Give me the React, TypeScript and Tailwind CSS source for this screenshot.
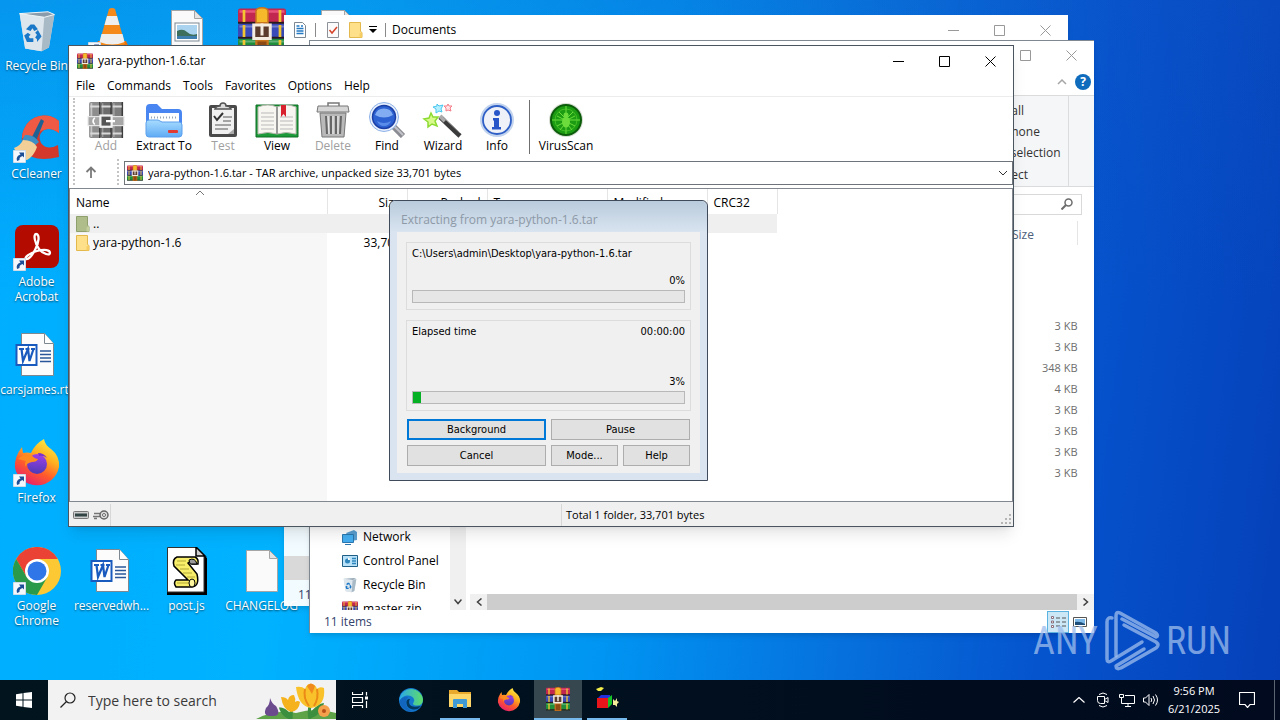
import React from "react";

type Kids = { children?: React.ReactNode };

/* ---------- shared glyphs ---------- */

function RarIcon({ className, mono = false }: { className: string; mono?: boolean }) {
  const c = mono
    ? { a: "#8d8d8d", b: "#6c6c6c", c: "#7d7d7d", dk: "#3c3c3c", belt: "#9a9a9a", edge: "#d9d9d9", lite: "#c4c4c4" }
    : { a: "#c2274f", b: "#3a4ab8", c: "#1f8f3c", dk: "#2a1a20", belt: "#c8741c", edge: "#f3c531", lite: "#e7557c" };
  return (
    <svg className={className} viewBox="0 0 32 32" aria-hidden="true">
      <g transform={mono ? "rotate(-90 16 16)" : undefined}>
        <rect x="0" y="1" width="32" height="10" rx="1.5" fill={c.a} />
        <rect x="0" y="11" width="32" height="10" rx="1.5" fill={c.b} />
        <rect x="0" y="21" width="32" height="10" rx="1.5" fill={c.c} />
        <path d="M1 3h30" stroke={c.lite} strokeWidth="1.6" />
        <path d="M1 13h30M1 23h30" stroke="#ffffff" strokeOpacity=".3" strokeWidth="1.4" />
        <path d="M0 10.5h32M0 20.5h32M0 30.5h32" stroke={c.dk} strokeWidth="1.4" />
        <path d="M4 2v8M4 12v8M4 22v8M28 2v8M28 12v8M28 22v8" stroke={c.edge} strokeWidth="1.8" />
      </g>
      {mono ? (
        <>
          <rect x="0" y="13" width="32" height="8" fill="#a6a6a6" stroke="#e9e9e9" />
          <path d="M6 14q-3 3 0 6" fill="none" stroke="#fff" strokeWidth="1.5" />
          <rect x="11" y="12" width="10" height="10" fill="#555" stroke="#f2f2f2" strokeWidth="2" />
          <path d="M16 17h8" stroke="#fff" strokeWidth="2" />
        </>
      ) : (
        <>
          <path d="M11.5 3q0-3 4.5-3t4.5 3v29h-9z" fill={c.belt} />
          <path d="M12.5 3q0-2 3.5-2t3.5 2v7h-7z" fill="#f6b92c" />
          <path d="M13 23h6v8h-6z" fill="#8d4a15" />
          <rect x="10.5" y="12" width="11" height="9" fill="#5b3b2c" stroke="#f4ece0" strokeWidth="2" />
          <path d="M16 11v8" stroke="#f4ece0" strokeWidth="2" />
        </>
      )}
    </svg>
  );
}

function FolderIcon({ className, green = false }: { className: string; green?: boolean }) {
  return (
    <svg className={className} viewBox="0 0 14 16" aria-hidden="true">
      <path d="M.5.5h11v9l1.5 1v5H.5z" fill={green ? "#aebd8a" : "#ffe08a"} stroke={green ? "#8fa06c" : "#e3b84d"} />
      <path d="M10.5 15.5v-4l2.5-1.5v5.5z" fill={green ? "#c4cf9e" : "#f6cd62"} />
    </svg>
  );
}

function MinIcon() {
  return (
    <svg className="h-[11px] w-[11px]" viewBox="0 0 11 11" aria-hidden="true">
      <path d="M0 5.5h11" stroke="currentColor" />
    </svg>
  );
}
function MaxIcon() {
  return (
    <svg className="h-[11px] w-[11px]" viewBox="0 0 11 11" aria-hidden="true">
      <path d="M.5.5h10v10H.5z" fill="none" stroke="currentColor" />
    </svg>
  );
}
function CloseIcon() {
  return (
    <svg className="h-[11px] w-[11px]" viewBox="0 0 11 11" aria-hidden="true">
      <path d="M.5.5l10 10M10.5.5l-10 10" stroke="currentColor" />
    </svg>
  );
}

function WindowButtons({ className }: { className: string }) {
  const cls = "flex w-[46px] items-center justify-center";
  return (
    <div className={`flex self-stretch ${className}`}>
      <button className={cls} aria-label="Minimize"><MinIcon /></button>
      <button className={cls} aria-label="Maximize"><MaxIcon /></button>
      <button className={cls} aria-label="Close"><CloseIcon /></button>
    </div>
  );
}

/* ---------- desktop icons ---------- */

function Shortcut({ children }: Kids) {
  return (
    <span className="relative block h-12 w-12">
      {children}
      <svg className="absolute bottom-0 left-0 h-[13px] w-[13px]" viewBox="0 0 13 13" aria-hidden="true">
        <path d="M.5.5h12v12H.5z" fill="#f4f8fc" stroke="#cfdbe6" />
        <path d="M4 11q-1.5-5 3.5-6.5L6 2.5h5v5L9.5 6Q6 7 6.5 10z" fill="#1e4f96" />
      </svg>
    </span>
  );
}

function BinIcon({ className }: { className: string }) {
  return (
    <svg className={className} viewBox="0 0 48 48" aria-hidden="true">
      <path d="M5 5l31-2 7 3-6 36-8 4-18-3z" fill="#cfdbe4" />
      <path d="M5 5l27 4-3 37-18-3z" fill="#dde6ec" />
      <path d="M32 9l11-3-6 36-8 4z" fill="#a9bac7" />
      <path d="M5 5l31-2 7 3-11 3z" fill="#8a9cab" stroke="#f3f8fb" />
      <path d="M12 22l5-5 4 0 4 5-4 2-2-3-2 3zM25 23l4 7-5 6v-3l-2-2 2-3-2-2zM20 36h-7l-3-7 4-3 3 2-2 2 1 2h4z" fill="#1b78c8" />
    </svg>
  );
}

function VlcIcon() {
  return (
    <svg className="h-12 w-12" viewBox="0 0 48 48" aria-hidden="true">
      <path d="M10 34h28l5 11H5z" fill="#e9700c" />
      <path d="M21 2q3-2 6 0l10 35q-13 6-26 0z" fill="#f58a1b" />
      <path d="M19 9h10l2.5 9h-15zM13.500 27h21l2 8q-12 5-25 0z" fill="#efefef" />
    </svg>
  );
}

function ImageFileIcon() {
  return (
    <svg className="h-12 w-12" viewBox="0 0 48 48" aria-hidden="true">
      <path d="M8.5 3.5h23l8 8v33h-31z" fill="#fafafa" stroke="#a5a5a5" />
      <path d="M31.5 3.5v8h8z" fill="#e4e4e4" stroke="#a5a5a5" />
      <rect x="12" y="16" width="24" height="18" fill="#fff" stroke="#7b8894" />
      <rect x="14" y="18" width="20" height="14" fill="#a9d3ef" />
      <path d="M14 24q6-3 10 1t10 2v5H14z" fill="#3d6f5c" />
      <path d="M14 29h20v3H14z" fill="#3f7fb0" />
    </svg>
  );
}

function PlainFileIcon() {
  return (
    <svg className="h-12 w-12" viewBox="0 0 48 48" aria-hidden="true">
      <path d="M8.5 3.5h23l8 8v33h-31z" fill="#fafafa" stroke="#a5a5a5" />
      <path d="M31.5 3.5v8h8z" fill="#e4e4e4" stroke="#a5a5a5" />
    </svg>
  );
}

function WordIcon() {
  return (
    <svg className="h-12 w-12" viewBox="0 0 48 48" aria-hidden="true">
      <path d="M8.5 2.5h23l9 10v32h-32z" fill="#fcfcfc" stroke="#7e8890" />
      <path d="M31.5 2.5v10h9" fill="#fff" stroke="#7e8890" />
      <path d="M27 20h11M27 23.5h11M27 27h11M27 30.5h11" stroke="#2b579a" strokeWidth="1.3" />
      <rect x="3.5" y="14" width="20" height="20" fill="#fff" stroke="#185abd" strokeWidth="2" />
      <path d="M6 18h5M12.5 18h4M18 18h4M8.5 18l1.5 12 5-12 1.5 12L20.5 18" fill="none" stroke="#185abd" strokeWidth="2.2" />
    </svg>
  );
}

function AcrobatIcon() {
  return (
    <svg className="h-12 w-12" viewBox="0 0 48 48" aria-hidden="true">
      <rect x="2" y="2" width="44" height="43" rx="8" fill="#b30b00" />
      <path
        d="M23 11c4 0 3 9-1 16-3 6-7 10-9 9s3-6 11-8 13-1 13 2-7 1-11-4-6-15-3-15z"
        fill="none" stroke="#fff" strokeWidth="2.3"
      />
    </svg>
  );
}

function CCleanerIcon() {
  return (
    <svg className="h-12 w-12" viewBox="0 0 48 48" aria-hidden="true">
      <path d="M46 6A22 22 0 0 0 11 14Q6 26 12 36q8 12 34 6L45 30Q34 36 28 28q-4-8 3-13 7-3 15 3z" fill="#d4382a" />
      <path d="M46 6A22 22 0 0 0 11 14q-2 4-2 9l15-3q2-4 7-5 7-3 15 3z" fill="#ee5a43" />
      <path d="M28 4l3 2-8 20-5-2z" fill="#1f6193" />
      <path d="M12 20q9-1 14 7l-6 5-12-5z" fill="#3d8fc4" />
      <path d="M1 33q7-3 9-8 10 0 14 7-3 9-10 13Q6 45 1 33z" fill="#f3cf98" />
    </svg>
  );
}

function FirefoxIcon({ className }: { className: string }) {
  return (
    <svg className={className} viewBox="0 0 48 48" aria-hidden="true">
      <defs>
        <linearGradient id="ffx" x1=".8" y1="0" x2=".25" y2="1">
          <stop offset="0" stopColor="#fff04a" />
          <stop offset=".35" stopColor="#ffb21f" />
          <stop offset=".65" stopColor="#ff5a2c" />
          <stop offset="1" stopColor="#e51b72" />
        </linearGradient>
        <linearGradient id="ffp" x1=".5" y1="0" x2=".4" y2="1">
          <stop offset="0" stopColor="#a03ee8" />
          <stop offset="1" stopColor="#4b3bb5" />
        </linearGradient>
      </defs>
      <path d="M31 0q1 6 7 10 9 7 8 18A22.500 22.500 0 0 1 2 29Q1 18 9 8l1 6q4-1 8 0Q22 5 31 0z" fill="url(#ffx)" />
      <circle cx="24" cy="25" r="10" fill="url(#ffp)" />
      <path d="M5 20q6-6 14-4 1 3 6 4-1 3-6 3-6 1-6 5-2-3 0-6z" fill="#ff8a1f" />
      <path d="M25 14q6 0 9 5-4-3-8-2z" fill="#7b2fd0" />
    </svg>
  );
}

function ChromeIcon() {
  return (
    <svg className="h-12 w-12" viewBox="0 0 48 48" aria-hidden="true">
      <circle cx="24" cy="24" r="24" fill="#fcc934" />
      <path d="M3.2 12A24 24 0 0 1 44.8 12H24l-10.4 18z" fill="#ea4335" />
      <path d="M3.2 12A24 24 0 0 0 24 48l10.4-18H13.6z" fill="#2a9a4a" />
      <circle cx="24" cy="24" r="12" fill="#fff" />
      <circle cx="24" cy="24" r="9.5" fill="#2f76e8" />
    </svg>
  );
}

function ScriptIcon() {
  return (
    <svg className="h-12 w-12" viewBox="0 0 48 48" aria-hidden="true">
      <path d="M4 1h29l11 10v37H4z" fill="#000" />
      <path d="M4.5.5H33l8 8V45H4.500z" fill="#fff" stroke="#333" />
      <path d="M33 0v9h9z" fill="#cfcfcf" stroke="#000" strokeWidth="1.5" />
      <path d="M14 10h18q4 2 3 7h-6q-1-4-4-1l9 11q3 13-6 13H13q-3-4 0-7h12L11 19q-2-7 3-9z" fill="#f8ee6a" stroke="#000" strokeWidth="1.5" />
      <path d="M26 13q6-3 8 4h-7z" fill="#9a9a9a" stroke="#000" />
      <path d="M14 14h9M13 18h9M17 22h9M20 26h9M24 30h8M14 36h13" stroke="#b3a838" />
      <ellipse cx="29" cy="36" rx="3" ry="4" fill="#fff7a0" stroke="#000" />
    </svg>
  );
}

type DeskItem = { cell: string; label?: string; icon: React.ReactNode };
const desk: DeskItem[] = [
  { cell: "col-start-1 row-start-1", label: "Recycle Bin", icon: <span className="block h-12 w-12 pt-0.5 pl-0.5"><BinIcon className="h-11 w-11" /></span> },
  { cell: "col-start-2 row-start-1", icon: <Shortcut><VlcIcon /></Shortcut> },
  { cell: "col-start-3 row-start-1", icon: <ImageFileIcon /> },
  { cell: "col-start-4 row-start-1", icon: <RarIcon className="h-12 w-12" /> },
  { cell: "col-start-5 row-start-1", icon: <PlainFileIcon /> },
  { cell: "col-start-1 row-start-2", label: "CCleaner", icon: <Shortcut><CCleanerIcon /></Shortcut> },
  { cell: "col-start-1 row-start-3", label: "Adobe Acrobat", icon: <Shortcut><AcrobatIcon /></Shortcut> },
  { cell: "col-start-1 row-start-4", label: "carsjames.rtf", icon: <WordIcon /> },
  { cell: "col-start-1 row-start-5", label: "Firefox", icon: <Shortcut><FirefoxIcon className="h-12 w-12" /></Shortcut> },
  { cell: "col-start-1 row-start-6", label: "Google Chrome", icon: <Shortcut><ChromeIcon /></Shortcut> },
  { cell: "col-start-2 row-start-6", label: "reservedwh...", icon: <WordIcon /> },
  { cell: "col-start-3 row-start-6", label: "post.js", icon: <ScriptIcon /> },
  { cell: "col-start-4 row-start-6", label: "CHANGELOG", icon: <PlainFileIcon /> },
];

function DesktopIcons() {
  return (
    <ul className="-ml-px grid auto-rows-[108px] grid-cols-[repeat(5,75px)] pt-[7px]">
      {desk.map((d) => (
        <li key={d.cell} className={`flex flex-col items-center gap-[3px] ${d.cell}`}>
          {d.icon}
          {d.label && (
            <span className="text-center text-[12px] leading-[15px] text-white [text-shadow:0_1px_2px_rgba(0,0,0,0.6)]">
              {d.label}
            </span>
          )}
        </li>
      ))}
    </ul>
  );
}

/* ---------- explorer windows behind ---------- */

function DocumentsWindow() {
  return (
    <section className="absolute top-[15px] left-[284px] flex h-[591px] w-[784px] flex-col bg-white/95 shadow-md" aria-label="Documents">
      <header className="flex h-[30px] items-center bg-white">
        <svg className="ml-2 h-4 w-4" viewBox="0 0 16 16" aria-hidden="true">
          <path d="M2.5.5h8l3 3v12h-11z" fill="#fff" stroke="#7b8894" />
          <path d="M4.5 4h3M4.5 6.5h7M4.5 9h7M4.5 11.5h7M9 4h2" stroke="#2378c4" strokeWidth="1.5" />
        </svg>
        <span className="ml-[7px] h-3.5 border-l border-[#8a8a8a]" />
        <svg className="ml-[9px] h-4 w-4" viewBox="0 0 16 16" aria-hidden="true">
          <path d="M2.5.5h11v15h-11z" fill="#fbfbfb" stroke="#8d9299" />
          <path d="M4.5 8l2.5 3 5-6" fill="none" stroke="#d5442b" strokeWidth="1.5" />
        </svg>
        <FolderIcon className="ml-2 h-4 w-3.5" />
        <svg className="ml-1.5 h-2 w-2" viewBox="0 0 8 8" aria-hidden="true">
          <path d="M0 .5h8" stroke="#000" />
          <path d="M0 3h8L4 7z" fill="#000" />
        </svg>
        <span className="ml-2 h-3.5 border-l border-[#8a8a8a]" />
        <h2 className="ml-1.5 flex-1 text-[12px]">Documents</h2>
        <WindowButtons className="text-[#999]" />
      </header>
      <div className="flex-1" />
      <div className="h-6 bg-[#d9d9d9]" />
      <footer className="h-[26px] pl-3.5 text-[12px] leading-[30px] text-[#33436b]">11 items</footer>
    </section>
  );
}

const sizes = ["3 KB", "3 KB", "348 KB", "4 KB", "3 KB", "3 KB", "3 KB", "3 KB"];

function NetworkIcon() {
  return (
    <svg className="h-4 w-4" viewBox="0 0 16 16" aria-hidden="true">
      <path d="M4 4l8-3 3 2v8l-6 1z" fill="#5b9fd0" />
      <path d="M.5 5.5h11v8H.500z" fill="#45aef0" stroke="#2b77ae" />
      <path d="M3 15.5h6" stroke="#2b77ae" />
    </svg>
  );
}
function ControlPanelIcon() {
  return (
    <svg className="h-4 w-4" viewBox="0 0 16 16" aria-hidden="true">
      <path d="M.5 2.5h15v11H.500z" fill="#b9e1f7" stroke="#1f5f86" />
      <circle cx="5.5" cy="8" r="2.5" fill="#2f86bd" />
      <path d="M6 7V4.5A2.5 2.5 0 0 1 8 7z" fill="#fff" />
      <path d="M10 5.5h4M10 8h4M10 10.5h4" stroke="#2f86bd" strokeWidth="1.5" />
    </svg>
  );
}

const nav = [
  { label: "Network", icon: <NetworkIcon /> },
  { label: "Control Panel", icon: <ControlPanelIcon /> },
  { label: "Recycle Bin", icon: <BinIcon className="h-4 w-4" /> },
  { label: "master.zip", icon: <RarIcon className="h-4 w-4" /> },
];

function ExplorerWindow() {
  return (
    <section className="absolute top-[40px] left-[309px] flex h-[593px] w-[785px] flex-col border-t border-l border-[#7f8790] bg-white shadow-md" aria-label="File Explorer">
      <header className="flex h-7 items-center justify-end">
        <WindowButtons className="text-[#999]" />
      </header>
      <div className="flex h-[26px] items-center justify-end gap-2 pr-[3px]">
        <svg className="h-2 w-2.5" viewBox="0 0 10 8" aria-hidden="true">
          <path d="M1 6l4-4 4 4" fill="none" stroke="#a5a5a5" strokeWidth="1.5" />
        </svg>
        <button className="flex h-4 w-4 items-center justify-center rounded-full bg-[#0f6cbd] text-[12px] font-bold text-white" aria-label="Help">?</button>
      </div>
      <div className="flex h-[92px] justify-end border-y border-[#dadbdc] bg-[#f5f6f7] pr-[25px]">
        <div className="flex w-[94px] flex-col border-r border-[#dcdddf] pt-1 text-[12px] text-[#333]">
          <button className="h-[22px] text-left">Select all</button>
          <button className="h-[22px] text-left">Select none</button>
          <button className="h-[22px] text-left whitespace-nowrap">Invert selection</button>
          <span className="pl-5 leading-[22px]">Select</span>
        </div>
      </div>
      <div className="flex h-[34px] items-center justify-end pr-3">
        <label className="flex h-[21px] w-[180px] items-center border border-[#d9d9d9] pr-2">
          <input className="min-w-0 flex-1 outline-none" aria-label="Search" />
          <svg className="h-3 w-3" viewBox="0 0 12 12" aria-hidden="true">
            <circle cx="7.5" cy="4.5" r="3.5" fill="none" stroke="#6d6d6d" strokeWidth="1.5" />
            <path d="M5 7L.5 11.5" stroke="#6d6d6d" strokeWidth="2" />
          </svg>
        </label>
      </div>
      <div className="flex min-h-0 flex-1">
        <div className="flex w-[140px] flex-col justify-end overflow-hidden">
          <ul className="-mb-[11px]">
            {nav.map((n) => (
              <li key={n.label} className="flex h-6 items-center gap-[5px] pl-8 text-[12px]">
                {n.icon}
                {n.label}
              </li>
            ))}
          </ul>
        </div>
        <div className="flex w-4 flex-col justify-end bg-[#f0f0f0]">
          <button className="flex h-[17px] items-center justify-center" aria-label="Scroll down">
            <svg className="h-1.5 w-2" viewBox="0 0 8 6" aria-hidden="true">
              <path d="M.5.5L4 4.5 7.5.5" fill="none" stroke="#404040" strokeWidth="1.5" />
            </svg>
          </button>
        </div>
        <div className="ml-1 flex flex-1 flex-col">
          <div className="flex-1 pr-4">
            <table className="ml-auto w-[76px]">
              <thead>
                <tr className="h-6">
                  <th className="border-r border-[#e5e5e5] pt-1 pl-2.5 text-left text-[12px] font-normal text-[#4c607a]">Size</th>
                </tr>
              </thead>
              <tbody className="before:block before:h-[71px]">
                {sizes.map((s, i) => (
                  <tr key={i} className="h-[21px]">
                    <td className="text-right text-[11px] text-[#6d6d6d]">{s}</td>
                  </tr>
                ))}
              </tbody>
            </table>
          </div>
          <div className="flex h-4 items-center bg-[#f0f0f0]">
            <button className="flex w-[17px] justify-center" aria-label="Scroll left">
              <svg className="h-2 w-1.5" viewBox="0 0 6 8" aria-hidden="true">
                <path d="M5.5.5L1.5 4l4 3.5" fill="none" stroke="#404040" strokeWidth="1.5" />
              </svg>
            </button>
            <span className="h-full flex-1 bg-[#cdcdcd]" />
            <button className="flex w-[17px] justify-center" aria-label="Scroll right">
              <svg className="h-2 w-1.5" viewBox="0 0 6 8" aria-hidden="true">
                <path d="M.5.5l4 3.5-4 3.5" fill="none" stroke="#404040" strokeWidth="1.5" />
              </svg>
            </button>
          </div>
        </div>
      </div>
      <footer className="flex h-[23px] items-center pl-3.5 text-[12px] text-[#33436b]">
        <span className="flex-1">11 items</span>
        <button className="flex h-[22px] w-[22px] items-center justify-center border border-[#5cb3e0] bg-[#cce8f7]" aria-label="Details view">
          <svg className="h-3.5 w-4" viewBox="0 0 16 14" aria-hidden="true">
            <path d="M1.5 1.5h2v2h-2zM1.5 6h2v2h-2zM1.5 10.5h2v2h-2z" fill="#fff" stroke="#8c6f7b" />
            <path d="M6 3h4M12 3h4M6 7h4M12 7h4M6 11h4M12 11h4" stroke="#555" />
          </svg>
        </button>
        <button className="flex w-[25px] justify-center pr-1" aria-label="Large icons view">
          <svg className="h-2.5 w-3.5" viewBox="0 0 14 10" aria-hidden="true">
            <path d="M.5.5h13v9H.500z" fill="#fff" stroke="#555" />
            <path d="M2 2h10v6H2z" fill="#7db9e8" />
            <path d="M2 5q5-1 10 2v1H2z" fill="#1e4e79" />
          </svg>
        </button>
      </footer>
    </section>
  );
}

/* ---------- archiver toolbar icons ---------- */

const big = "h-9 w-11";

function ExtractIcon() {
  return (
    <svg className={big} viewBox="0 0 44 36" aria-hidden="true">
      <defs>
        <linearGradient id="fold" x1="0" y1="0" x2="0" y2="1">
          <stop offset="0" stopColor="#a8dcff" />
          <stop offset="1" stopColor="#5fabf5" />
        </linearGradient>
      </defs>
      <path d="M4 6q0-4 4-4h7l5 5h16q4 0 4 4v12H4z" fill="#4a86f2" />
      <path d="M7 11h30v12H7z" fill="#fff" />
      <path d="M9 15.5h26" stroke="#9aa5b5" strokeWidth="2" strokeDasharray="1 2" />
      <path d="M4 21q0-3 3-3h9l4 2h17q3 0 3 3v9q0 3-3 3H7q-3 0-3-3z" fill="url(#fold)" stroke="#5c9fec" />
      <rect x="26" y="28" width="10" height="3" rx="1" fill="#e23a30" />
    </svg>
  );
}
function TestIcon() {
  return (
    <svg className={big} viewBox="0 0 44 36" aria-hidden="true">
      <rect x="8" y="3" width="28" height="32" rx="2" fill="#4a4a4a" />
      <path d="M11 6h22v26H11z" fill="#f0f0f0" />
      <path d="M14 7q1-3 5-3 0-3 3-3t3 3q4 0 5 3z" fill="#ddd" stroke="#555" strokeWidth="1.5" />
      <path d="M13 14l3 4 6-7" fill="none" stroke="#333" strokeWidth="2" />
      <path d="M22 15h9M22 19h8M14 23h16M14 27h13" stroke="#8a8a8a" strokeWidth="1.5" />
      <path d="M33 32l-6 0 6-5z" fill="#aaa" />
    </svg>
  );
}
function ViewIcon() {
  return (
    <svg className={big} viewBox="0 0 44 36" aria-hidden="true">
      <path d="M1 3h42v32H1z" fill="#1c9a3a" stroke="#0c6e25" />
      <path d="M3 5q10-4 19 0v27q-9-3-19 0zM22 5q9-4 19 0v27q-10-3-19 0z" fill="#f7f6f1" stroke="#b8b8ae" />
      <path d="M6 11h13M6 15h13M6 19h13M6 23h13M6 27h13M25 15h13M25 19h13M25 23h13M25 27h13" stroke="#b9b9b9" />
      <path d="M22 5v27" stroke="#999" strokeWidth="2" />
      <path d="M26 3h5v12l-2.5-3-2.5 3z" fill="#d8222e" />
    </svg>
  );
}
function DeleteIcon() {
  return (
    <svg className={big} viewBox="0 0 44 36" aria-hidden="true">
      <path d="M17 4V1h11v3" fill="none" stroke="#777" strokeWidth="1.5" />
      <path d="M7 4h30l1 6H6z" fill="#d6d6d6" stroke="#777" />
      <path d="M9 11h26l-2 24H11z" fill="#b9b9b9" stroke="#777" />
      <path d="M15 14l1 18M20 14v18M25 14v18M30 14l-1 18" stroke="#666" strokeWidth="2" />
      <path d="M17 14l1 18M22 14v18M27 14v18" stroke="#f2f2f2" />
    </svg>
  );
}
function FindIcon() {
  return (
    <svg className={big} viewBox="0 0 44 36" aria-hidden="true">
      <path d="M29 25l9 9" stroke="#8b8b93" strokeWidth="6" />
      <path d="M29 24l9 9" stroke="#c3c3ca" strokeWidth="2" />
      <circle cx="19" cy="15" r="14.5" fill="#e6effb" stroke="#8db1e8" />
      <circle cx="19" cy="15" r="11.5" fill="#2d62d2" stroke="#1b3fa5" strokeWidth="1.5" />
      <path d="M10 13a9.5 9.5 0 0 1 18 0q-9 5-18 0z" fill="#82adf2" />
      <path d="M12 19q7 4 14 0-2 5-7 5t-7-5z" fill="#5a8cea" />
    </svg>
  );
}
function WizardIcon() {
  return (
    <svg className={big} viewBox="0 0 44 36" aria-hidden="true">
      <path d="M19 15l20 19" stroke="#3b3b3b" strokeWidth="4.5" />
      <path d="M19 14l5 5" stroke="#aaa" strokeWidth="4" />
      <path d="M22 15l17 16" stroke="#9a9a9a" strokeWidth="1" />
      <path d="M10 11l2 4 5 0-3 4 2 5-5-2-4 3 0-5-4-3 5-1z" fill="#d8fa8c" stroke="#8ddb32" strokeWidth="1.5" />
      <path d="M16 2l2 2 4-1-2 4 1 3-3-1-3 2 0-4-3-2 4-1z" fill="#b3efff" stroke="#49c6ee" />
      <path d="M27 2l1 2 3 0-2 2 1 3-3-1-2 1 0-3-2-2 3 0z" fill="#ffe3e6" stroke="#f47d88" />
    </svg>
  );
}
function InfoIcon() {
  return (
    <svg className={big} viewBox="0 0 44 36" aria-hidden="true">
      <circle cx="22" cy="18" r="17" fill="#c2d3ee" />
      <circle cx="22" cy="18" r="14" fill="#eef1f7" stroke="#2e5fc6" strokeWidth="1.8" />
      <circle cx="22" cy="11" r="3" fill="#2856c8" />
      <path d="M18 16h6v9h2v2.5h-9V25h2v-6.5h-1z" fill="#2856c8" />
    </svg>
  );
}
function VirusIcon() {
  return (
    <svg className={big} viewBox="0 0 44 36" aria-hidden="true">
      <circle cx="22" cy="18" r="17" fill="#d4dbd0" />
      <circle cx="22" cy="18" r="15" fill="#1c9c12" stroke="#0b5c0a" strokeWidth="2" />
      <g stroke="#6bdc3c" fill="none">
        <path d="M22 4v28M8 18h28M15 10l5 5M29 10l-5 5M13 14l6 3M31 14l-6 3M13 24l6-3M31 24l-6-3M16 28l4-5M28 28l-4-5" />
        <circle cx="22" cy="18" r="11" strokeOpacity=".5" />
      </g>
      <ellipse cx="22" cy="20" rx="4" ry="5.5" fill="#6bdc3c" />
      <circle cx="22" cy="13" r="2.5" fill="#6bdc3c" />
    </svg>
  );
}

const tools = [
  { label: "Add", w: "w-[54px]", off: true, icon: <RarIcon mono className={big} /> },
  { label: "Extract To", w: "w-[62px]", off: false, icon: <ExtractIcon /> },
  { label: "Test", w: "w-[56px]", off: true, icon: <TestIcon /> },
  { label: "View", w: "w-[52px]", off: false, icon: <ViewIcon /> },
  { label: "Delete", w: "w-[60px]", off: true, icon: <DeleteIcon /> },
  { label: "Find", w: "w-[48px]", off: false, icon: <FindIcon /> },
  { label: "Wizard", w: "w-[64px]", off: false, icon: <WizardIcon /> },
  { label: "Info", w: "w-[44px]", off: false, icon: <InfoIcon /> },
];

function ToolButton({ label, w, off, icon }: { label: string; w: string; off: boolean; icon: React.ReactNode }) {
  return (
    <button disabled={off} className={`flex flex-col items-center whitespace-nowrap text-[12px] leading-4 disabled:text-[#a0a0a0] ${w}`}>
      {icon}
      {label}
    </button>
  );
}

const heads = [
  { label: "Name", cls: "w-[257px] text-left" },
  { label: "Size", cls: "w-20 text-right" },
  { label: "Packed", cls: "w-20 text-right" },
  { label: "Type", cls: "w-[120px] text-left" },
  { label: "Modified", cls: "w-[100px] text-left" },
  { label: "CRC32", cls: "w-[70px] text-left" },
];

function ArchiverWindow() {
  return (
    <section className="absolute top-[45px] left-[68px] flex h-[482px] w-[946px] flex-col border border-[#4a5560] bg-white text-[12px] shadow-lg" aria-label="yara-python-1.6.tar">
      <header className="flex h-[30px] items-center pl-2">
        <RarIcon className="h-4 w-4" />
        <h1 className="ml-[5px] flex-1">yara-python-1.6.tar</h1>
        <WindowButtons className="" />
      </header>
      <nav className="flex h-5 items-center pl-px">
        {["File", "Commands", "Tools", "Favorites", "Options", "Help"].map((m) => (
          <button key={m} className="px-1.5">{m}</button>
        ))}
      </nav>
      <div className="flex h-[63px] border-t border-[#ececec] pt-[5px]">
        <span className="-mt-1 mr-1 ml-1 border-l-2 border-dotted border-[#c4c4c4]" />
        {tools.map((t) => (
          <ToolButton key={t.label} {...t} />
        ))}
        <span className="mr-[9px] ml-2.5 -mt-0.5 h-[54px] border-l border-[#6f6f6f]" />
        <ToolButton label="VirusScan" w="w-[54px]" off={false} icon={<VirusIcon />} />
      </div>
      <div className="flex h-[29px] pb-[3px]">
        <span className="ml-1 border-l-2 border-dotted border-[#c4c4c4]" />
        <button className="flex w-8 items-center justify-center" aria-label="Up one level">
          <svg className="h-3 w-3" viewBox="0 0 12 12" aria-hidden="true">
            <path d="M6 12V2M1.5 6L6 1.5 10.5 6" fill="none" stroke="#7a7a7a" strokeWidth="1.8" />
          </svg>
        </button>
        <span className="mr-[5px] ml-2.5 border-l-2 border-dotted border-[#c4c4c4]" />
        <label className="relative mt-0.5 flex flex-1 items-center border border-[#6f747a]">
          <RarIcon className="absolute left-0.5 h-4 w-4" />
          <select className="h-full w-full appearance-none bg-transparent pl-[23px] text-[11px] outline-none" aria-label="Archive path">
            <option>yara-python-1.6.tar - TAR archive, unpacked size 33,701 bytes</option>
          </select>
          <svg className="absolute right-1 h-1.5 w-2.5" viewBox="0 0 10 6" aria-hidden="true">
            <path d="M1 1l4 4 4-4" fill="none" stroke="#333" />
          </svg>
        </label>
      </div>
      <div className="relative flex min-h-0 flex-1 border border-[#828790]">
        <svg className="absolute top-px left-[125px] h-1.5 w-2.5" viewBox="0 0 10 6" aria-hidden="true">
          <path d="M1 5l4-4 4 4" fill="none" stroke="#777" />
        </svg>
        <table className="h-full w-[707px] table-fixed">
          <thead>
            <tr className="h-[25px]">
              {heads.map((h) => (
                <th key={h.label} className={`border-r border-[#e5e5e5] px-1.5 pt-0.5 font-normal ${h.cls}`}>{h.label}</th>
              ))}
            </tr>
          </thead>
          <tbody>
            <tr className="h-[19px] bg-[#efefef]">
              <td className="pl-1.5">
                <span className="flex items-center gap-[3px]"><FolderIcon green className="h-4 w-3.5" />..</span>
              </td>
              <td colSpan={5} />
            </tr>
            <tr className="h-[19px]">
              <td className="bg-[#f7f7f7] pl-1.5">
                <span className="flex items-center gap-[3px]"><FolderIcon className="h-4 w-3.5" />yara-python-1.6</span>
              </td>
              <td className="pr-1.5 text-right">33,701</td>
              <td colSpan={4} />
            </tr>
            <tr>
              <td className="bg-[#f7f7f7]" />
              <td colSpan={5} />
            </tr>
          </tbody>
        </table>
      </div>
      <footer className="relative flex h-6 items-center bg-[#f0f0f0] pt-0.5">
        <div className="flex h-full w-[42px] items-center gap-1 border-r border-[#d7d7d7] pl-1">
          <svg className="h-2 w-4" viewBox="0 0 16 8" aria-hidden="true">
            <rect x=".5" y=".5" width="15" height="7" rx="1" fill="#ccc" stroke="#777" />
            <path d="M2 4h12" stroke="#344" strokeWidth="3" />
          </svg>
          <svg className="h-2.5 w-4" viewBox="0 0 16 10" aria-hidden="true">
            <path d="M1 3.5h6M0 6.5h8M1 8.5h3" stroke="#777" strokeWidth="1.5" />
            <circle cx="11" cy="5" r="4" fill="#ddd" stroke="#666" strokeWidth="1.5" />
            <circle cx="11" cy="5" r="1.5" fill="#fff" stroke="#666" />
          </svg>
        </div>
        <div className="h-full flex-1 border-r border-[#d7d7d7]" />
        <div className="w-[451px] pl-1 text-[11px]">Total 1 folder, 33,701 bytes</div>
        <svg className="absolute right-0.5 bottom-0.5 h-2.5 w-2.5" viewBox="0 0 10 10" aria-hidden="true">
          <path d="M8 0h2v2H8zM8 4h2v2H8zM8 8h2v2H8zM4 4h2v2H4zM4 8h2v2H4zM0 8h2v2H0z" fill="#b5b5b5" />
        </svg>
      </footer>
    </section>
  );
}

/* ---------- progress dialog ---------- */

function Bar({ value, label }: { value: number; label: string }) {
  return (
    <div role="progressbar" aria-label={label} aria-valuenow={value} className="h-[13px] border border-[#b8b8b8] bg-[#e6e6e6]">
      <div className="h-full bg-[#06b025]" style={{ width: `${value}%` }} />
    </div>
  );
}

function ProgressDialog() {
  const btn = "h-[21px] border border-[#adadad] bg-[#e1e1e1]";
  return (
    <section
      className="absolute top-[200px] left-[389px] w-[319px] rounded-t-md border border-[#3f4a5a] bg-[#d9e4f0] px-[7px] pb-[7px] font-[Tahoma,'DejaVu_Sans_Condensed','Noto_Sans',sans-serif] text-[11px] leading-[14px]"
      aria-label="Extracting"
    >
      <h2 className="-mx-[7px] h-[31px] rounded-t-md bg-linear-to-b from-[#b9cbdc] to-[#d9e4f0] pt-1 pl-[11px] font-['Open_Sans',sans-serif] text-[12px] leading-[30px] text-[#8d99a6]">
        Extracting from yara-python-1.6.tar
      </h2>
      <div className="flex flex-col bg-[#f0f0f0] px-[9px] pt-[10px] pb-[7px]">
        <div className="flex h-[68px] flex-col border border-[#dcdcdc] px-[5px] pt-1 pb-1.5">
          <p className="flex-1">C:\Users\admin\Desktop\yara-python-1.6.tar</p>
          <p className="pb-0.5 text-right">0%</p>
          <Bar value={0} label="File progress" />
        </div>
        <div className="mt-[10px] flex h-[91px] flex-col border border-[#dcdcdc] px-[5px] pt-1 pb-1.5">
          <p className="flex flex-1 justify-between"><span>Elapsed time</span><span>00:00:00</span></p>
          <p className="pb-0.5 text-right">3%</p>
          <Bar value={3} label="Total progress" />
        </div>
        <div className="mx-px mt-2 grid grid-cols-[139fr_67fr_67fr] gap-[5px]">
          <button className="h-[21px] border-2 border-[#0078d7] bg-[#e1e1e1]">Background</button>
          <button className={`col-span-2 ${btn}`}>Pause</button>
          <button className={btn}>Cancel</button>
          <button className={btn}>Mode...</button>
          <button className={btn}>Help</button>
        </div>
      </div>
    </section>
  );
}

/* ---------- watermark ---------- */

function Watermark() {
  return (
    <div className="pointer-events-none absolute right-[49px] bottom-2 flex items-center gap-1.5 font-['Liberation_Sans_Narrow','Roboto_Condensed',Roboto,sans-serif] text-[38px] leading-[62px] text-[#9dbdec]/75">
      <span>ANY</span>
      <svg className="h-[62px] w-[56px]" viewBox="0 0 56 62" aria-hidden="true">
        <g fill="none" stroke="currentColor" strokeWidth="3.5" strokeLinejoin="round" strokeLinecap="round">
          <path d="M8 8Q3 7 3 12v37q0 4 4 2l31-19" />
          <path d="M12 46V6q0-5 4-3l36 20q3 3 0 4l-34-18" />
          <path d="M20 15l32 17q4 3 0 6L17 58q-5 2-5-2l28-17" />
        </g>
      </svg>
      <span>RUN</span>
    </div>
  );
}

/* ---------- taskbar ---------- */

function EdgeIcon() {
  return (
    <svg className="h-6 w-6" viewBox="0 0 24 24" aria-hidden="true">
      <defs>
        <linearGradient id="edg" x1="0" y1="0" x2="1" y2="0">
          <stop offset="0" stopColor="#2aa9e8" />
          <stop offset="1" stopColor="#5fdc6a" />
        </linearGradient>
      </defs>
      <circle cx="12" cy="12" r="12" fill="#1478cf" />
      <path d="M.5 10A12 12 0 0 1 24 11.500q0 6-6 6-4 0-4-2 2-2 1-4.500Q13 7 8 7.500T.5 13z" fill="url(#edg)" />
      <path d="M9 9q-4 5-1 10 4 6 11 2.500A12 12 0 0 1 .5 13Q4 8 9 9z" fill="#1266bd" />
      <path d="M11 11q-2 3 0 6t11 1q-3 4-8 3.500-6-1-6.500-6T11 11z" fill="#03395f" />
    </svg>
  );
}
function ExplorerIcon() {
  return (
    <svg className="h-5 w-[22px]" viewBox="0 0 22 20" aria-hidden="true">
      <path d="M0 1h8l2 2h12v15H0z" fill="#e8a92c" />
      <path d="M0 5h22v13H0z" fill="#ffd768" />
      <path d="M4 11q0-1 1-1h12q1 0 1 1v8h-4v-4H8v4H4z" fill="#3f9ad6" />
    </svg>
  );
}
function BoxesIcon() {
  return (
    <svg className="h-6 w-6" viewBox="0 0 24 24" aria-hidden="true">
      <path d="M1 2l5-2 3 1-3 3H3z" fill="#f4ee4a" />
      <path d="M3 11l3-3h9v3z" fill="#2330e0" />
      <path d="M2 11h11v10H2z" fill="#e8151a" />
      <path d="M13 11l4-3v9l-4 4z" fill="#16c42a" />
      <path d="M18 12l2 2 2-3v3l2 1-2 2v3l-2-2-2 0v-3z" fill="#f4ee9a" />
    </svg>
  );
}
function TaskViewIcon() {
  return (
    <svg className="h-4 w-4" viewBox="0 0 16 16" aria-hidden="true">
      <path d="M.5 0v2.5h10V0M.5 5.5h10v5H.500zM.5 16v-2.5h10V16M14.5 0v3.5M14.5 9v7" fill="none" stroke="#fff" strokeWidth="1.2" />
      <path d="M13 4.5h3v3h-3z" fill="#fff" />
    </svg>
  );
}
function Flowers() {
  return (
    <svg className="h-[38px] w-20" viewBox="0 0 80 38" aria-hidden="true">
      <path d="M0 38q20-10 40-6 20-6 40 0v6z" fill="#5fa348" />
      <path d="M14 17q2 6 6 8 6 10-3 10-11 1-7-8 4-3 4-10z" fill="#6b4a8e" />
      <path d="M35 38q1-10-1-14M54 38q-2-8 1-16M54 34q8-9 12-10-2 9-12 12M34 34q-6-6-9-6 2 6 9 9" stroke="#3c8f3e" strokeWidth="3" fill="#3c8f3e" />
      <path d="M25 16q5 0 7 3 1-5 6-5 2 4 1 7 3-2 5 0-1 9-9 10-8-2-10-15z" fill="#f6b21c" />
      <path d="M40 6q6-1 9 2 2-6 7-5 4 1 5 5 3-3 7-1 2 18-13 20Q42 25 40 6z" fill="#f9c22a" />
      <path d="M49 8q-2 9 4 17M61 8q2 9-3 17" stroke="#ec8a17" strokeWidth="2" fill="none" />
      <path d="M51 5q4-5 8 0l-3 8z" fill="#f08a1c" />
      <circle cx="68" cy="30" r="6" fill="#f5a04a" />
      <circle cx="68" cy="30" r="2" fill="#b8501a" />
    </svg>
  );
}

function Taskbar() {
  const ico = "flex h-full items-center justify-center";
  return (
    <footer className="relative flex h-10 items-stretch bg-linear-to-r from-[#02151e] to-[#010a1e] text-white">
      <button className={`w-12 ${ico}`} aria-label="Start">
        <svg className="h-4 w-4" viewBox="0 0 16 16" aria-hidden="true">
          <path d="M0 2.2l6.5-.9v6.200H0zM7.5 1.1L16 0v7.500H7.500zM0 8.500h6.500v6.200L0 13.800zM7.500 8.500H16V16l-8.500-1.100z" fill="#fff" />
        </svg>
      </button>
      <label className="flex w-[288px] items-center bg-[#f2f2f2] pl-3">
        <svg className="h-4 w-4 shrink-0" viewBox="0 0 16 16" aria-hidden="true">
          <circle cx="10" cy="6" r="5" fill="none" stroke="#222" strokeWidth="1.2" />
          <path d="M6.5 9.5L.5 15.5" stroke="#222" strokeWidth="1.2" />
        </svg>
        <input className="ml-3 min-w-0 flex-1 bg-transparent text-[14px] outline-none placeholder:text-[#3a3a3a]" placeholder="Type here to search" aria-label="Type here to search" />
        <Flowers />
      </label>
      <button className={`w-12 ${ico}`} aria-label="Task View"><TaskViewIcon /></button>
      <button className={`ml-[3px] w-12 ${ico}`} aria-label="Edge"><EdgeIcon /></button>
      <button className={`ml-[5px] w-10 border-b-2 border-[#76b9ed] ${ico}`} aria-label="File Explorer"><ExplorerIcon /></button>
      <button className={`ml-[5px] w-12 ${ico}`} aria-label="Firefox"><FirefoxIcon className="h-6 w-6" /></button>
      <button className={`ml-px w-12 border-b-2 border-[#76b9ed] bg-[#37474f] ${ico}`} aria-label="WinRAR"><RarIcon className="h-6 w-6" /></button>
      <button className={`ml-[5px] w-10 border-b-2 border-[#76b9ed] ${ico}`} aria-label="Setup"><BoxesIcon /></button>
      <div className="ml-auto flex items-center">
        <button className={`w-6 ${ico}`} aria-label="Show hidden icons">
          <svg className="h-1.5 w-3" viewBox="0 0 12 6" aria-hidden="true"><path d="M.5 5.5L6 .5l5.5 5" fill="none" stroke="#fff" strokeWidth="1.2" /></svg>
        </button>
        <button className={`w-6 ${ico}`} aria-label="Meet Now">
          <svg className="h-4 w-3" viewBox="0 0 12 16" aria-hidden="true">
            <path d="M2 2.5Q6-.5 10 2.5M2 13.5q4 3 8 0M.5 4.5h7v7h-4q-3 0-3-3zM7.5 7.5l3.5-2v5l-3.5-2" fill="none" stroke="#fff" />
          </svg>
        </button>
        <button className={`w-6 ${ico}`} aria-label="Network">
          <svg className="h-3.5 w-4" viewBox="0 0 16 14" aria-hidden="true">
            <path d="M.5 1.5h4v3h-4zM2.5 4.5v5M6 2.5h9.5v8H2.5v-2M9 10.5v3M6 13.5h6" fill="none" stroke="#fff" />
          </svg>
        </button>
        <button className={`w-6 ${ico}`} aria-label="Volume">
          <svg className="h-3.5 w-4" viewBox="0 0 16 14" aria-hidden="true">
            <path d="M.5 5h2L6 1.5v11L2.5 9h-2zM8 5q1.5 2 0 4M10 3q3 4 0 8M12.5 1.5q4 5.5 0 11" fill="none" stroke="#fff" />
          </svg>
        </button>
        <div className="w-[62px] text-center text-[11px] leading-[18px]">
          <div>9:56 PM</div>
          <div>6/21/2025</div>
        </div>
        <button className={`w-[44px] ${ico}`} aria-label="Notifications">
          <svg className="h-4 w-4" viewBox="0 0 16 16" aria-hidden="true"><path d="M.5.5h15v12H11l-2.5 3-2.500-3H.500z" fill="none" stroke="#fff" strokeWidth="1.2" /></svg>
        </button>
        <span className="ml-[5px] h-10 w-[6px] border-l border-[#5a6472]" />
      </div>
    </footer>
  );
}

export default function App() {
  return (
    <div className="flex h-screen flex-col overflow-hidden font-['Open_Sans','Noto_Sans',sans-serif] text-black">
      <main className="relative flex-1 overflow-hidden bg-[linear-gradient(180deg,rgba(20,80,190,0.25),rgba(0,160,255,0)_45%),linear-gradient(97deg,#00aeff_0%,#00b2ff_25%,#0095f2_50%,#0670dc_68%,#0554ce_82%,#0540b8_100%)]">
        <DesktopIcons />
        <DocumentsWindow />
        <ExplorerWindow />
        <ArchiverWindow />
        <ProgressDialog />
        <Watermark />
      </main>
      <Taskbar />
    </div>
  );
}
